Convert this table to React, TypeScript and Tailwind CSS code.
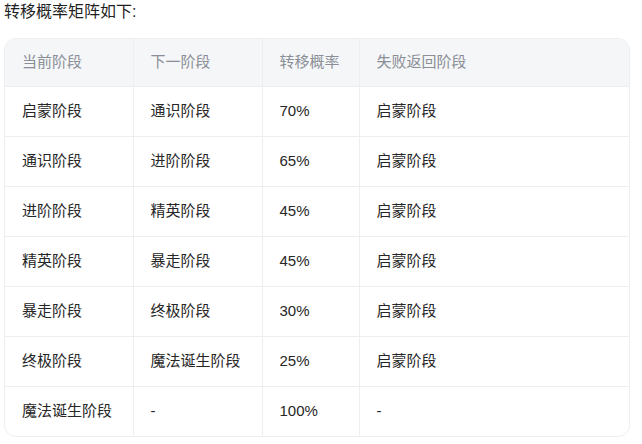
import React from "react";

const rows: string[][] = [
  ["启蒙阶段", "通识阶段", "70%", "启蒙阶段"],
  ["通识阶段", "进阶阶段", "65%", "启蒙阶段"],
  ["进阶阶段", "精英阶段", "45%", "启蒙阶段"],
  ["精英阶段", "暴走阶段", "45%", "启蒙阶段"],
  ["暴走阶段", "终极阶段", "30%", "启蒙阶段"],
  ["终极阶段", "魔法诞生阶段", "25%", "启蒙阶段"],
  ["魔法诞生阶段", "-", "100%", "-"],
];

const headers = ["当前阶段", "下一阶段", "转移概率", "失败返回阶段"];
const widths = ["w-[128px]", "w-[129px]", "w-[97px]", "w-auto"];

export default function App() {
  return (
    <div
      className="w-[642px] h-[444px] bg-white text-[15px] text-[#262626]"
      style={{ fontFamily: '"Liberation Sans", "Noto Sans CJK SC", sans-serif' }}
    >
      <div className="pl-[4px] pt-[2px] leading-[20px] text-[16px] text-[#1f1f1f]">转移概率矩阵如下:</div>
      <div className="ml-[4px] mt-[16px] w-[626px] rounded-[12px] border border-[#eceef1] overflow-hidden">
        <table className="w-full border-collapse table-fixed">
          <colgroup>
            {widths.map((w, i) => (
              <col key={i} className={w} />
            ))}
          </colgroup>
          <thead>
            <tr className="bg-[#f5f6f8] h-[47px]">
              {headers.map((h, i) => (
                <th
                  key={i}
                  className={`text-left font-normal text-[#8a8e96] pl-[17px] ${i < 3 ? "border-r border-[#eceef1]" : ""}`}
                >
                  {h}
                </th>
              ))}
            </tr>
          </thead>
          <tbody>
            {rows.map((r, ri) => (
              <tr key={ri} className="h-[50px] border-t border-[#eceef1]">
                {r.map((c, ci) => (
                  <td
                    key={ci}
                    className={`pl-[17px] text-[#262626] ${ci < 3 ? "border-r border-[#eceef1]" : ""}`}
                  >
                    {c}
                  </td>
                ))}
              </tr>
            ))}
          </tbody>
        </table>
      </div>
    </div>
  );
}
